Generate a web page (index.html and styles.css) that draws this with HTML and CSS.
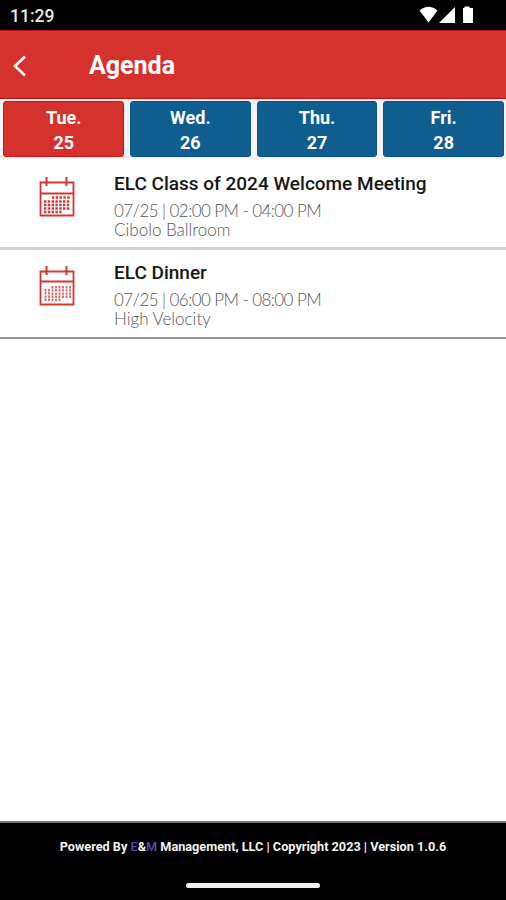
FILE: index.html
```html
<!DOCTYPE html>
<html lang="en">
<head>
    <meta charset="UTF-8">
    <title>Agenda</title>
    <link rel="stylesheet" href="styles.css">
</head>

<body>

    <!-- Status bar -->
    <div class="statusBar">
        <span class="clock">11:29</span>
        <svg class="statusIcons" width="56" height="18" viewBox="0 0 56 18">
            <path d="M0.500 4.500Q9.500 -3 18.500 4.500L9.500 16.500Z"/>
            <path d="M20 17L36 1V17Z"/>
            <path d="M46 0.500h4l1 1.500h3v15h-10V2H45z"/>
        </svg>
    </div>

    <!-- Header -->
    <header class="header">
        <svg class="back" width="14" height="22" viewBox="0 0 14 22">
            <path d="M12 1.500L2 11L12 20.500"/>
        </svg>
        <h1>Agenda</h1>
    </header>

    <!-- Days -->
    <nav class="days">
        <a class="day active">Tue.<br>25</a>
        <a class="day">Wed.<br>26</a>
        <a class="day">Thu.<br>27</a>
        <a class="day">Fri.<br>28</a>
    </nav>

    <!-- Sessions for the selected day -->
    <main class="sessions">
        <div class="session">
            <svg class="calendar" width="36" height="40" viewBox="0 0 36 40">
                <path class="frame" d="M1.500 5.500H34.500V38.500H1.500ZM1.500 16.500H34.500"/>
                <path class="rings" d="M7.500 0V9M27.500 0V9"/>
                <path class="dates" d="M13 20.500H31M5 24.500H31M5 28H31M5 31.500H31M5 35H23"/>
            </svg>
            <div class="info">
                <h2>ELC Class of 2024 Welcome Meeting</h2>
                <p class="time">07/25 | 02:00 PM - 04:00 PM</p>
                <p>Cibolo Ballroom</p>
            </div>
        </div>
        <div class="session last">
            <svg class="calendar" width="36" height="40" viewBox="0 0 36 40">
                <path class="frame" d="M1.500 5.500H34.500V38.500H1.500ZM1.500 15.500H34.500"/>
                <path class="rings" d="M7.500 0V9M27.500 0V9"/>
                <path class="columns" d="M6.500 23V35.500M10 23V35.500M13.500 20V35.500M17 20V35.500M20.500 20V35.500M24 20V32M27.500 20V32M31 20V32"/>
            </svg>
            <div class="info">
                <h2>ELC Dinner</h2>
                <p class="time">07/25 | 06:00 PM - 08:00 PM</p>
                <p>High Velocity</p>
            </div>
        </div>
    </main>

    <!-- Footer -->
    <footer class="footer">
        <p>Powered By <span class="brand">E</span>&amp;<span class="brand">M</span> Management, LLC | Copyright 2023 | Version 1.0.6</p>
        <div class="homeBar"></div>
    </footer>

</body>
</html>
```

FILE: styles.css
```css
* {
    box-sizing: border-box;
}

body {
    display: flex;
    flex-direction: column;
    height: 100vh;
    margin: 0;
    overflow: hidden;
    background: #fefefe;
    font-family: Roboto, sans-serif;
}

h1, h2, p {
    margin: 0;
    white-space: nowrap;
}

.statusBar {
    display: flex;
    justify-content: space-between;
    height: 30px;
    padding: 6px 31px 0 10px;
    background: #000;
    color: #e8e8e8;
}

.clock {
    font-size: 17.5px;
    font-weight: 500;
    line-height: 20px;
}

.statusIcons {
    fill: #fff;
}

.header {
    display: flex;
    align-items: center;
    height: 69px;
    padding: 2px 13px 0;
    background: #d6322d;
    border-top: 1px solid #b9120f;
    border-bottom: 1px solid #c40d0b;
    color: #fff;
}

.header h1 {
    margin-left: 62px;
    font-size: 25px;
    font-weight: 700;
}

.back {
    fill: none;
    stroke: #fff;
    stroke-width: 2.6;
}

.days {
    display: grid;
    grid-template-columns: repeat(4, 1fr);
    gap: 6px;
    height: 60px;
    padding: 2.4px 2px 2px 3.4px;
    background: #f7f3f5;
}

.day {
    padding-top: 2.6px;
    border: 1px solid #08558b;
    border-radius: 3px;
    background: #105d8f;
    color: #fff;
    font-size: 18px;
    font-weight: 700;
    line-height: 25px;
    text-align: center;
}

.day.active {
    border-color: #c81815;
    background: #d6322d;
}

.session {
    display: flex;
    height: 91px;
    padding: 14px 0 0 39px;
    border-bottom: 3px solid #d0d0d0;
}

.session.last {
    height: 89px;
    padding-top: 12px;
    border-bottom: 2px solid #949494;
}

.calendar {
    margin-top: 4px;
    fill: none;
    stroke: #d23632;
}

.frame {
    stroke-width: 1.8;
}

.rings {
    stroke-width: 2;
}

.dates {
    stroke-width: 2.4;
    stroke-dasharray: 2.4 1.4;
}

.columns {
    stroke-width: 1.8;
    stroke-dasharray: 2.4 0.8;
    opacity: 0.8;
}

.info {
    margin-left: 39px;
}

.info h2 {
    margin-bottom: 6px;
    color: #161616;
    font-size: 19px;
    font-weight: 500;
    line-height: 22px;
}

.info p {
    color: #585858;
    font-family: "Lato Light", Lato, sans-serif;
    font-size: 17px;
    font-weight: 300;
    line-height: 19px;
}

.info .time {
    letter-spacing: -0.57px;
}

.footer {
    display: flex;
    flex-direction: column;
    align-items: center;
    height: 79px;
    margin-top: auto;
    padding-top: 16px;
    border-top: 2px solid #777;
    background: #000;
    color: #f2f2f2;
}

.footer p {
    font-size: 12.7px;
    font-weight: 700;
    line-height: 15px;
}

.brand {
    color: #5b4cb5;
    font-weight: 500;
}

.homeBar {
    width: 134px;
    height: 5px;
    margin-top: 29px;
    border-radius: 3px;
    background: #f2f2f2;
}
```
